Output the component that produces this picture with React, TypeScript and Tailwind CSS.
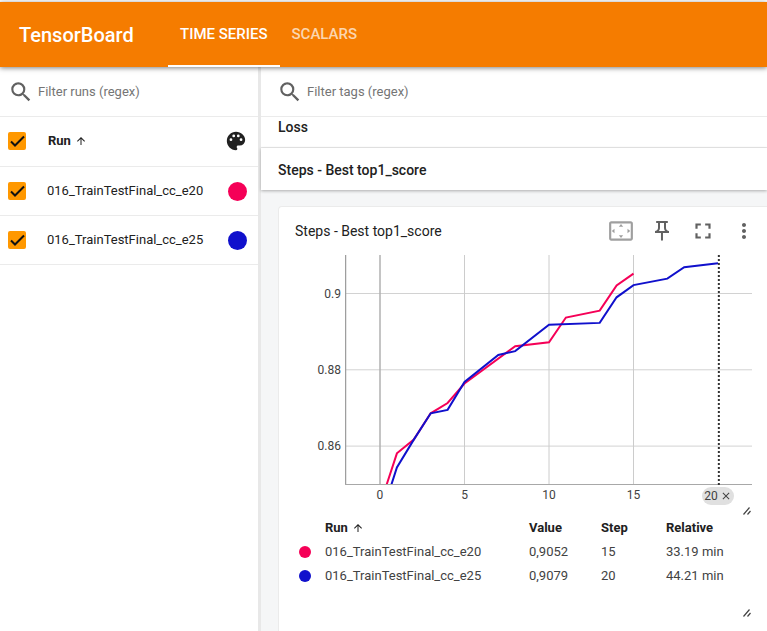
import { useState, type ReactNode } from "react";
import {
  MdArrowUpward,
  MdClose,
  MdFullscreen,
  MdMoreVert,
  MdOutlinePushPin,
  MdSearch,
  MdSettingsOverscan,
} from "react-icons/md";

type Run = {
  id: string;
  name: string;
  color: string;
  value: string;
  step: number;
  relative: string;
  points: [number, number][];
};

const runs: Run[] = [
  {
    id: "e20",
    name: "016_TrainTestFinal_cc_e20",
    color: "#f50057",
    value: "0,9052",
    step: 15,
    relative: "33.19 min",
    points: [
      [0, 0.8446], [1, 0.8581], [2, 0.8617], [3, 0.8686], [4, 0.8713], [5, 0.8764],
      [8, 0.8862], [10, 0.8872], [11, 0.8937], [13, 0.8955], [14, 0.9021], [15, 0.9052],
    ],
  },
  {
    id: "e25",
    name: "016_TrainTestFinal_cc_e25",
    color: "#1010cc",
    value: "0,9079",
    step: 20,
    relative: "44.21 min",
    points: [
      [0, 0.8406], [1, 0.8544], [2, 0.8617], [3, 0.8686], [4, 0.8695], [5, 0.8768],
      [7, 0.8839], [8, 0.8849], [10, 0.8918], [13, 0.8923], [14, 0.899], [15, 0.9022],
      [17, 0.9039], [18, 0.9069], [20, 0.9079],
    ],
  },
];

const PLOT_WIDTH = 407;
const PLOT_HEIGHT = 230;
const scaleX = (step: number) => 35 + step * 16.9;
const scaleY = (value: number) => 38.5 + (0.9 - value) * 3815;
const percentX = (step: number) => `${(scaleX(step) / PLOT_WIDTH) * 100}%`;

const xTicks = [0, 5, 10, 15];
const yTicks = [0.9, 0.88, 0.86];

function Checkbox({ label }: { label: string }) {
  const [checked, setChecked] = useState(true);
  return (
    <label className="relative block size-[18px] shrink-0">
      <input
        type="checkbox"
        aria-label={label}
        checked={checked}
        onChange={(e) => setChecked(e.target.checked)}
        className="block size-[18px] appearance-none rounded-xs border-2 border-gray-500 checked:border-[#ff9800] checked:bg-[#ff9800]"
      />
      {checked && (
        <svg viewBox="0 0 18 18" className="pointer-events-none absolute inset-0" aria-hidden="true">
          <path d="M3 9.500l4 4L16 4.500" fill="none" stroke="#111" strokeWidth="2" />
        </svg>
      )}
    </label>
  );
}

function PaletteIcon() {
  return (
    <svg viewBox="0 0 24 24" className="size-[22px]" fill="currentColor" aria-hidden="true">
      <path d="M17.500 12a1.500 1.500 0 0 1-1.500-1.500A1.500 1.500 0 0 1 17.500 9a1.500 1.500 0 0 1 1.500 1.500 1.500 1.500 0 0 1-1.500 1.500m-3-4A1.500 1.500 0 0 1 13 6.500 1.500 1.500 0 0 1 14.500 5 1.500 1.500 0 0 1 16 6.500 1.500 1.500 0 0 1 14.500 8m-5 0A1.500 1.500 0 0 1 8 6.500 1.500 1.500 0 0 1 9.500 5 1.500 1.500 0 0 1 11 6.500 1.500 1.500 0 0 1 9.500 8m-3 4A1.500 1.500 0 0 1 5 10.500 1.500 1.500 0 0 1 6.500 9 1.500 1.500 0 0 1 8 10.500 1.500 1.500 0 0 1 6.500 12M12 2C6.500 2 2 6.500 2 12s4.500 10 10 10a1.500 1.500 0 0 0 1.500-1.500c0-.4-.14-.75-.4-1-.23-.27-.37-.61-.37-1A1.500 1.500 0 0 1 14.230 17H16a6 6 0 0 0 6-6c0-4.960-4.500-9-10-9z" />
    </svg>
  );
}

function SearchBox({ id, placeholder, indent }: { id: string; placeholder: string; indent: "pl-2" | "pl-4" }) {
  return (
    <div className={`flex h-[50px] shrink-0 items-center gap-1 border-b border-[#ebebeb] bg-white ${indent}`}>
      <label htmlFor={id} aria-label={placeholder}>
        <MdSearch className="size-[26px] text-[#616161]" />
      </label>
      <input
        id={id}
        type="text"
        placeholder={placeholder}
        className="min-w-0 flex-1 text-[13px] text-[#212121] outline-none placeholder:text-[#757575]"
      />
    </div>
  );
}

function IconButton({ label, children }: { label: string; children: ReactNode }) {
  return (
    <button type="button" aria-label={label} className="flex h-6 w-[41px] items-center justify-center text-[#616161]">
      {children}
    </button>
  );
}

function ResizeHandle() {
  return (
    <svg viewBox="0 0 8 8" className="ml-auto block size-2" aria-hidden="true">
      <path d="M0.500 7.500L6.500 0.500M4.500 7.500L7.500 4" stroke="#424242" strokeWidth="1.2" fill="none" />
    </svg>
  );
}

function Chart() {
  return (
    <div className="-mr-px flex">
      <svg className="h-[230px] w-[50px] shrink-0" aria-hidden="true">
        {yTicks.map((v) => (
          <text key={v} x="46" y={scaleY(v) + 4} textAnchor="end" fontSize="12" fill="#424242">
            {v}
          </text>
        ))}
      </svg>
      <div className="relative min-w-0 flex-1">
        <svg className="block h-[256px] w-full" role="img" aria-label="Steps - Best top1_score by step">
          {yTicks.map((v) => (
            <line key={v} x1="0" x2="100%" y1={scaleY(v)} y2={scaleY(v)} stroke="#d2d2d2" />
          ))}
          {xTicks.map((s) => (
            <line
              key={s}
              x1={percentX(s)}
              x2={percentX(s)}
              y1="0"
              y2="229"
              stroke={s === 0 ? "#b0b0b0" : "#cccccc"}
              strokeWidth={s === 0 ? 1.5 : 1}
            />
          ))}
          <line x1="0.500" x2="0.500" y1="0" y2="230" stroke="#9e9e9e" strokeWidth="1.5" />
          <line x1="0" x2="100%" y1="229.500" y2="229.500" stroke="#a8a8a8" />
          <svg
            width="100%"
            height={PLOT_HEIGHT - 1}
            viewBox={`0 0 ${PLOT_WIDTH} ${PLOT_HEIGHT - 1}`}
            preserveAspectRatio="none"
          >
            {runs.map((run) => (
              <polyline
                key={run.id}
                points={run.points.map(([s, v]) => `${scaleX(s)},${scaleY(v)}`).join(" ")}
                fill="none"
                stroke={run.color}
                strokeWidth="2"
                vectorEffect="non-scaling-stroke"
              />
            ))}
          </svg>
          <line
            x1={percentX(20.05)}
            x2={percentX(20.05)}
            y1="0"
            y2="230"
            stroke="#333333"
            strokeWidth="2"
            strokeDasharray="2 2"
          />
          {xTicks.map((s) => (
            <text key={s} x={percentX(s)} y="244" textAnchor="middle" fontSize="12" fill="#424242">
              {s}
            </text>
          ))}
        </svg>
        <button
          type="button"
          aria-label="Deselect step 20"
          className="absolute bottom-1.5 flex h-[18px] w-8 -translate-x-1/2 items-center justify-center gap-0.5 rounded-full bg-[#e0e0e0] text-xs text-[#424242]"
          style={{ left: percentX(20) }}
        >
          20
          <MdClose className="size-3" />
        </button>
      </div>
    </div>
  );
}

export default function App() {
  return (
    <div className="flex h-screen flex-col overflow-hidden bg-white font-['Roboto','Liberation_Sans',sans-serif] text-[#212121]">
      <header className="relative z-10 mt-0.5 flex h-[65px] shrink-0 items-stretch bg-[#f57c00] shadow-[0_1px_5px_rgba(0,0,0,0.5)]">
        <h1 className="flex w-[168px] items-center pl-[19px] text-xl font-medium text-white">TensorBoard</h1>
        <nav className="flex text-[15px] font-medium">
          <a href="#timeseries" className="flex items-center border-b-2 border-white px-3 pt-0.5 text-white">
            TIME SERIES
          </a>
          <a href="#scalars" className="flex items-center border-b-2 border-transparent px-3 pt-0.5 text-white/70">
            SCALARS
          </a>
        </nav>
      </header>

      <div className="flex min-h-0 flex-1">
        <aside className="w-[261px] shrink-0 border-r-[3px] border-[#e8e8e8]">
          <SearchBox id="run-filter" placeholder="Filter runs (regex)" indent="pl-2" />
          <div className="flex h-[50px] items-center border-b border-[#ebebeb] pb-px pl-2 pr-[11px]">
            <Checkbox label="Select all runs" />
            <button type="button" className="ml-[22px] flex flex-1 items-center gap-1 text-[13px] font-bold">
              Run <MdArrowUpward className="size-3" />
            </button>
            <button type="button" aria-label="Color runs by">
              <PaletteIcon />
            </button>
          </div>
          {runs.map((run) => (
            <div key={run.id} className="flex h-[49px] items-center border-b border-[#ebebeb] pl-2 pr-[11px]">
              <Checkbox label={run.name} />
              <span className="ml-[21px] flex-1 text-[13px]">{run.name}</span>
              <button
                type="button"
                aria-label={`Change color of ${run.name}`}
                className="size-[19px] rounded-full"
                style={{ backgroundColor: run.color }}
              />
            </div>
          ))}
        </aside>

        <main className="flex min-w-0 flex-1 flex-col bg-[#f5f6f7]">
          <SearchBox id="tag-filter" placeholder="Filter tags (regex)" indent="pl-4" />
          <h2 className="flex h-[31px] shrink-0 items-start border-b border-[#ebebeb] bg-white pl-[17px] text-sm font-medium">
            Loss
          </h2>
          <h2 className="flex h-[42px] shrink-0 items-center bg-white pl-[17px] pt-0.5 text-sm font-medium shadow-[0_1px_3px_rgba(0,0,0,0.3)]">
            Steps - Best top1_score
          </h2>

          <section className="ml-[17px] mt-4 min-h-0 flex-1 rounded-tl border-l border-t border-[#ebebeb] bg-white px-4 pt-3">
            <div className="flex h-6 items-center">
              <h3 className="flex-1 text-sm">Steps - Best top1_score</h3>
              <div className="-mr-[13px] flex">
                <IconButton label="Fit domain to data">
                  <MdSettingsOverscan className="size-[26px] opacity-60" />
                </IconButton>
                <IconButton label="Pin card">
                  <MdOutlinePushPin className="size-6" />
                </IconButton>
                <IconButton label="Toggle full size">
                  <MdFullscreen className="size-[26px]" />
                </IconButton>
                <IconButton label="More options">
                  <MdMoreVert className="size-6" />
                </IconButton>
              </div>
            </div>

            <div className="pt-3">
              <Chart />
              <div className="-mt-1">
                <ResizeHandle />
              </div>
            </div>

            <table className="w-full table-fixed text-left text-[13px]">
              <colgroup>
                <col className="w-[30px]" />
                <col />
                <col className="w-[72px]" />
                <col className="w-[65px]" />
                <col className="w-[85px]" />
              </colgroup>
              <thead>
                <tr className="h-[25px]">
                  <th aria-label="Color" />
                  <th className="font-bold">
                    <span className="flex items-center gap-1">
                      Run <MdArrowUpward className="size-3" />
                    </span>
                  </th>
                  <th className="font-bold">Value</th>
                  <th className="font-bold">Step</th>
                  <th className="font-bold">Relative</th>
                </tr>
              </thead>
              <tbody className="text-[#424242]">
                {runs.map((run) => (
                  <tr key={run.id} className="h-6">
                    <td>
                      <span className="ml-1 block size-3 rounded-full" style={{ backgroundColor: run.color }} />
                    </td>
                    <td>{run.name}</td>
                    <td>{run.value}</td>
                    <td>{run.step}</td>
                    <td>{run.relative}</td>
                  </tr>
                ))}
              </tbody>
            </table>
            <div className="pt-[21px]">
              <ResizeHandle />
            </div>
          </section>
        </main>
      </div>
    </div>
  );
}
